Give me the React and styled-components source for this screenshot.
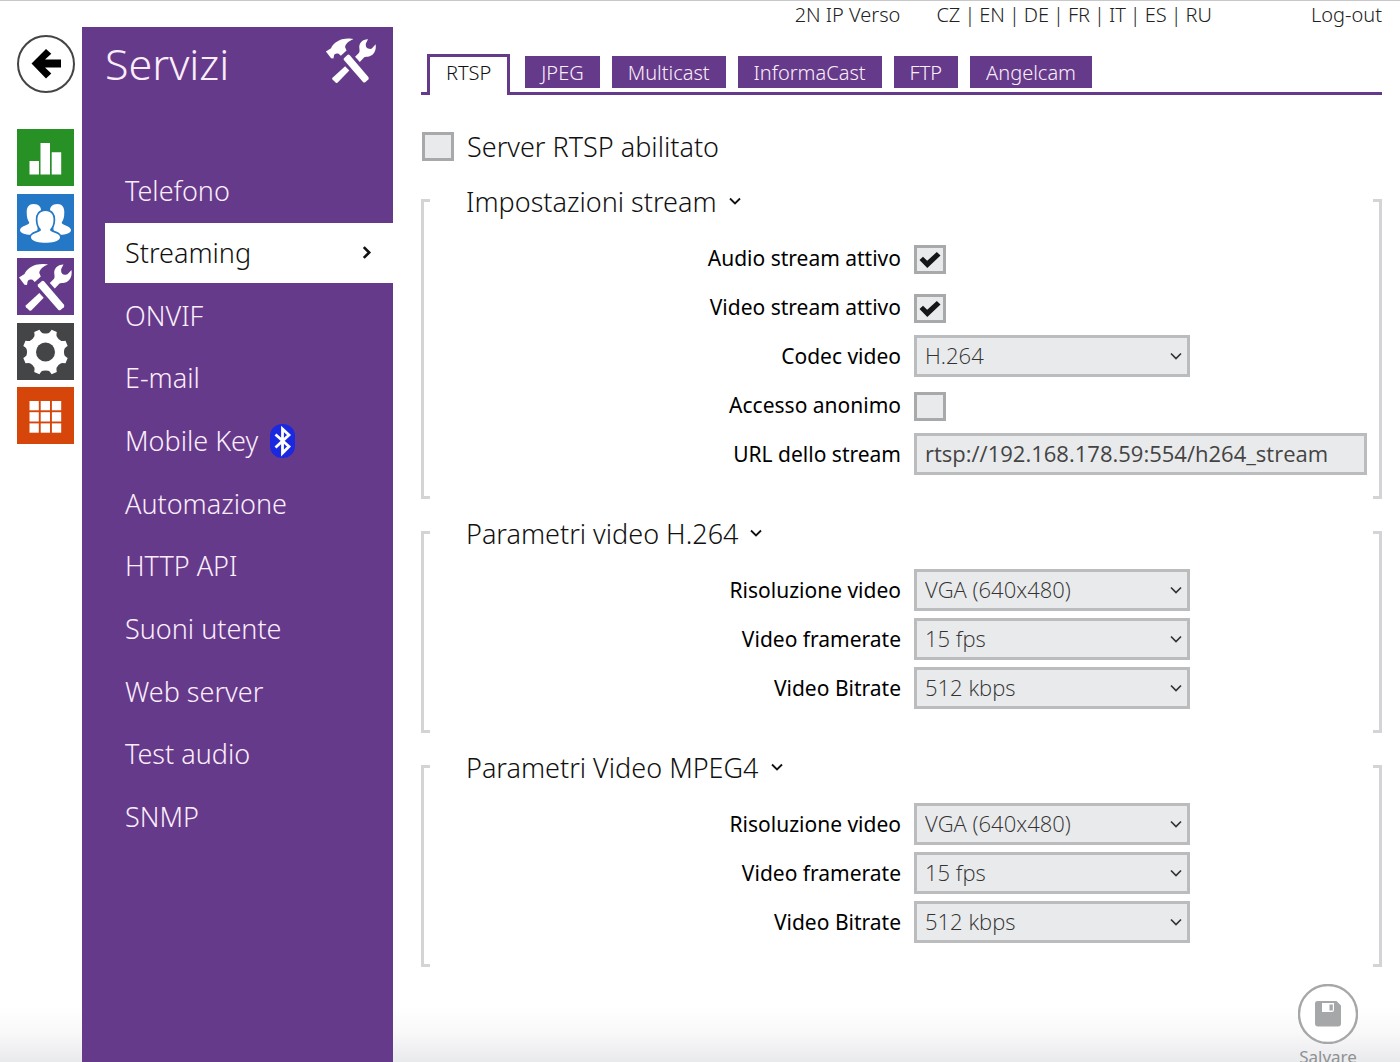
import React, { useState } from 'react'
import styled, { createGlobalStyle } from 'styled-components'

const PURPLE = '#663a8a'

const GlobalStyle = createGlobalStyle`
    *, *::before, *::after { box-sizing: border-box; }
    body {
        margin: 0;
        background: #fff;
        font-family: "Noto Sans", "Open Sans", sans-serif;
        font-weight: 300;
        color: #111;
    }
    button, input, select { font: inherit; color: inherit; margin: 0; }
    h1, h2, ul { margin: 0; padding: 0; font-weight: 300; }
    a { color: inherit; text-decoration: none; }
`;

const Page = styled.div`
    display: flex;
    min-height: 100vh;
    border-top: 1px solid #c8c8ca;
    background: linear-gradient(to top, #e9eaec 0px, #f8f8f9 28px, #fff 56px) fixed;
`;

/* left rail */
const Rail = styled.nav`
    flex: 0 0 82px;
    padding: 34px 0 0 17px;
`;
const BackButton = styled.button`
    display: block;
    width: 58px;
    height: 58px;
    padding: 0;
    border: 2px solid #444;
    border-radius: 50%;
    background: #fff;
    cursor: pointer;
`;
const RailLinks = styled.div`
    display: flex;
    flex-direction: column;
    justify-content: space-between;
    height: 315px;
    margin-top: 36px;
`;
const RailLink = styled.a`
    width: 57px;
    height: 57px;
    background: ${(p) => p.$color};
    svg { display: block; }
`;

/* purple menu */
const Sidebar = styled.aside`
    flex: 0 0 311px;
    margin-top: 26px;
    background: ${PURPLE};
    color: #fbeefc;
`;
const SidebarHead = styled.header`
    display: flex;
    align-items: flex-start;
    justify-content: space-between;
    height: 133px;
    padding: 0 15px 0 23px;
    svg { margin-top: 6px; }
`;
const Title = styled.h1`
    font-size: 43px;
    line-height: 74px;
`;
const Menu = styled.ul`
    display: grid;
    grid-auto-rows: 1fr;
    height: 689px;
    margin-left: 23px;
    list-style: none;
`;
const MenuLink = styled.a`
    display: flex;
    align-items: center;
    gap: 12px;
    height: 60px;
    padding: 0 20px;
    font-size: 27px;
    background: ${(p) => (p.$active ? '#fff' : 'transparent')};
    color: ${(p) => (p.$active ? '#111' : 'inherit')};
    svg:last-child { margin-left: ${(p) => (p.$active ? 'auto' : 0)}; }
`;

/* content */
const Main = styled.main`
    flex: 1;
    min-width: 0;
    padding: 0 18px 0 28px;
`;
const TopBar = styled.div`
    display: flex;
    justify-content: flex-end;
    height: 53px;
    font-size: 20px;
    line-height: 28px;
    color: #222;
`;
const Languages = styled.div`
    display: flex;
    gap: 4px;
    margin: 0 99px 0 36px;
`;
const Tabs = styled.div`
    display: flex;
    align-items: flex-end;
    gap: 12px;
    height: 41px;
    padding-left: 6px;
    border-bottom: 3px solid ${PURPLE};
`;
const Tab = styled.button`
    height: ${(p) => (p.$active ? 41 : 32)}px;
    margin: ${(p) => (p.$active ? '0 3px -3px 0' : '0 0 4px')};
    padding: ${(p) => (p.$active ? '0 16px 6px' : '2px 16px 0')};
    border: solid ${PURPLE};
    border-width: ${(p) => (p.$active ? '3px 3px 0' : 0)};
    background: ${(p) => (p.$active ? '#fff' : PURPLE)};
    color: ${(p) => (p.$active ? '#111' : '#fbeefc')};
    font-size: 20px;
    line-height: 30px;
    cursor: pointer;
`;
const ServerRow = styled.div`
    display: flex;
    align-items: center;
    gap: 13px;
    height: 28px;
    margin: 37px 0 39px;
    padding-left: 1px;
    font-size: 27px;
`;

const Section = styled.section`
    display: flex;
    margin-bottom: 32px;
`;
const Bracket = styled.span`
    flex: 0 0 9px;
    border: 3px solid #d3d4d6;
    ${(p) => (p.$right ? 'border-left: 0;' : 'border-right: 0;')}
`;
const SectionBody = styled.div`
    flex: 1;
    min-width: 0;
    padding-bottom: 24px;
`;
const SectionTitle = styled.h2`
    display: flex;
    align-items: center;
    gap: 12px;
    height: 32px;
    margin: -14px 0 20px;
    padding-left: 36px;
    font-size: 27px;
`;
const Fields = styled.div`
    display: grid;
    grid-template-columns: repeat(2, minmax(0, 1fr));
    grid-auto-rows: 42px;
    gap: 7px 13px;
    align-items: center;
    padding: 0 6px 0 18px;
`;
const Label = styled.label`
    text-align: right;
    font-size: 21px;
    font-weight: 400;
    color: #000;
`;
const CheckWrap = styled.span`
    display: grid;
    width: 32px;
    height: 29px;
    margin-top: ${(p) => (p.$field ? 3 : 0)}px;
    > * { grid-area: 1 / 1; }
    svg { place-self: center; pointer-events: none; }
`;
const CheckInput = styled.input`
    appearance: none;
    border: 3px solid #a8a9ab;
    background: #e9eaeb;
`;
const SelectWrap = styled.span`
    display: grid;
    width: 276px;
    max-width: 100%;
    > * { grid-area: 1 / 1; }
    svg { place-self: center end; margin-right: 8px; color: #333; pointer-events: none; }
`;
const SelectBox = styled.select`
    appearance: none;
    height: 42px;
    padding: 0 8px 2px;
    border: 3px solid #bbbcbe;
    border-radius: 0;
    background: #e9eaeb;
    font-family: "Open Sans", sans-serif;
    font-size: 22px;
    color: #333;
`;
const TextBox = styled.input`
    width: 100%;
    height: 42px;
    padding: 0 8px 2px;
    border: 3px solid #bbbcbe;
    background: #e9eaeb;
    font-family: "Open Sans", sans-serif;
    font-size: 22px;
    font-weight: 400;
    color: #444;
`;

const Footer = styled.footer`
    display: flex;
    justify-content: flex-end;
    margin-top: -15px;
    padding-right: 24px;
`;
const SaveButton = styled.button`
    display: flex;
    flex-direction: column;
    align-items: center;
    padding: 0;
    border: 0;
    background: none;
    color: #8f9092;
    font-size: 17px;
    font-weight: 400;
    line-height: 26px;
    cursor: pointer;
`;

/* icons */
const ToolsIcon = ({ size = 57 }) => (
  <svg width={size} height={size} viewBox="0 0 57 57" fill="#fff" aria-hidden="true">
    <path d="M2 19.5 L7.5 16 C9 12.500 13 8.500 19 6.700 C24 5.500 28.500 5.800 31 6.500 C26.500 8 22.300 11.500 22.300 15 L23.800 18.500 L17.800 24 L15.500 21.800 C12.500 21 10.800 22 10.500 24 L10 27 L7.500 26.700 Z" />
    <path d="M21.300 26.300 L25 23 Q26 22.300 27 23.300 L46.800 46.500 Q47.800 48 46.800 49.200 L43.500 52 Q42.300 52.800 41.200 51.700 L21 28.600 Q20.200 27.400 21.300 26.300Z" />
    <path d="M46.500 6.600 C40.500 6.500 36.600 11 37.300 16 C37.600 18.500 37.800 19.800 36.800 21 L32.800 25 L37.800 30.500 L42.500 25.500 C43.500 24.800 45.500 25 47.500 24.700 C52.500 24 55.500 18.500 54.500 12 L50.500 16.300 C49.300 17.200 46.300 16.700 45.200 15.700 C44.200 14.500 43.800 12 44.300 10.700 Z" />
    <path d="M22.300 35 L26.700 39.700 L14.500 52.300 Q13.300 53.200 12.200 52.200 L9 49.200 Q8 48.200 9 47.200 Z" />
  </svg>
);

const side = 'M16.500 10 C22 10 24.500 13 24 18 L21 30 L20 40.500 C10 42 3 39.500 3 36 C3 32 12.500 31 12.300 28.500 C10.500 26 9.700 23 9.700 18 C9.700 13 12 10 16.500 10Z';
const UsersIcon = () => (
  <svg width="57" height="57" viewBox="0 0 57 57" fill="#fff" aria-hidden="true">
    <path d={side} />
    <path d={side} transform="matrix(-1 0 0 1 57 0)" />
    <path
      d="M28.500 17 C34 17 36.700 20.500 36.500 26 C36.400 30.500 35.300 33 33 35.500 C33 39 43.500 38.500 43 43.500 C42.500 47.500 34 48.800 28.500 48.800 C23 48.800 14.500 47.500 14 43.500 C13.500 38.500 24 39 24 35.500 C21.700 33 20.600 30.500 20.500 26 C20.300 20.500 23 17 28.500 17Z"
      stroke="#2478c6" strokeWidth="3.500" paintOrder="stroke"
    />
  </svg>
);

const BarsIcon = () => (
  <svg width="57" height="57" viewBox="0 0 57 57" fill="#fff" aria-hidden="true">
    <path d="M12.500 32h9.500v13.500h-9.500z M23.500 14h9.500v31.500h-9.500z M34.700 23.300h9.500v22.200h-9.500z" />
  </svg>
);

const polar = (deg, r) => {
  const a = (deg * Math.PI) / 180;
  return `${(28.5 + r * Math.cos(a)).toFixed(1)} ${(29 + r * Math.sin(a)).toFixed(1)}`;
};
const gearPath = Array.from({ length: 8 }, (_, i) => {
  const a = 22.5 + i * 45;
  return `${i ? 'L' : 'M'}${polar(a - 7, 23)} L${polar(a + 7, 23)} Q${polar(a + 11, 19)} ${polar(a + 15, 19)} Q${polar(a + 22.5, 18)} ${polar(a + 30, 19)} Q${polar(a + 34, 19)} ${polar(a + 38, 23)}`;
}).join(' ');
const GearIcon = () => (
  <svg width="57" height="57" viewBox="0 0 57 57" aria-hidden="true">
    <path d={`${gearPath}Z`} fill="#fff" />
    <circle cx="28.500" cy="29" r="9.500" fill="#444547" />
  </svg>
);

const GridIcon = () => (
  <svg width="57" height="57" viewBox="0 0 57 57" fill="#fff" aria-hidden="true">
    {[0, 1, 2].map((y) => [0, 1, 2].map((x) => (
      <rect key={`${x}${y}`} x={12.5 + x * 11.2} y={14 + y * 11.2} width="9.300" height="9.300" />
    )))}
  </svg>
);

const ArrowIcon = () => (
  <svg width="54" height="54" viewBox="2 2 54 54" aria-hidden="true">
    <path d="M14.500 28.500 L29 14 L34.300 18.800 L28 24.500 H44 V32.500 H28 L34.300 38.500 L29 43.500 Z" />
  </svg>
);

const Chevron = ({ size = 12, right, width = 2 }) => (
  <svg width={size} height={size} viewBox="0 0 12 12" fill="none" stroke="currentColor" strokeWidth={width} aria-hidden="true">
    <path d={right ? 'M3.500 1 L8.500 6 L3.500 11' : 'M1 3.500 L6 8.500 L11 3.500'} />
  </svg>
);

const BluetoothIcon = () => (
  <svg width="25" height="34" viewBox="0 0 25 34" aria-hidden="true">
    <rect width="25" height="34" rx="12" fill="#1a28e0" />
    <path d="M5.500 10.500 L19 22.500 L12.500 29 V5 L19 11 L5.500 23.500" fill="none" stroke="#fff" strokeWidth="2.800" />
  </svg>
);

const CheckIcon = () => (
  <svg width="22" height="18" viewBox="0 0 22 18" aria-hidden="true">
    <path d="M0.500 9 L4 5.800 L8.200 9.800 L17.800 1 L21.500 4.500 L8.300 17 Z" fill="#161618" />
  </svg>
);

const SaveIcon = () => (
  <svg width="60" height="60" viewBox="0 0 60 60" aria-hidden="true">
    <circle cx="30" cy="30" r="29" fill="#fff" stroke="#a6a7a9" strokeWidth="2.400" />
    <path d="M19.500 17 H38.500 L43 21.500 V39.500 Q43 42.500 40 42.500 H20 Q17 42.500 17 39.500 V19.500 Q17 17 19.500 17Z" fill="#a6a7a9" />
    <path d="M24 19 H36 V26 Q36 28 34 28 H24Z" fill="#fff" />
    <rect x="31.500" y="20.500" width="3.300" height="6" fill="#a6a7a9" />
  </svg>
);

const rail = [
  { name: 'Stato', color: '#279126', icon: <BarsIcon /> },
  { name: 'Elenco', color: '#2478c6', icon: <UsersIcon /> },
  { name: 'Servizi', color: PURPLE, icon: <ToolsIcon /> },
  { name: 'Sistema', color: '#444547', icon: <GearIcon /> },
  { name: 'Hardware', color: '#d64509', icon: <GridIcon /> },
];

const menu = [
  'Telefono', 'Streaming', 'ONVIF', 'E-mail', 'Mobile Key', 'Automazione',
  'HTTP API', 'Suoni utente', 'Web server', 'Test audio', 'SNMP',
];
const tabs = ['RTSP', 'JPEG', 'Multicast', 'InformaCast', 'FTP', 'Angelcam'];
const languages = ['CZ', 'EN', 'DE', 'FR', 'IT', 'ES', 'RU'];

const videoFields = [
  { label: 'Risoluzione video', type: 'select', options: ['VGA (640x480)', 'QVGA (320x240)'] },
  { label: 'Video framerate', type: 'select', options: ['15 fps', '30 fps'] },
  { label: 'Video Bitrate', type: 'select', options: ['512 kbps', '1024 kbps'] },
];
const sections = [
  {
    id: 'stream',
    title: 'Impostazioni stream',
    fields: [
      { label: 'Audio stream attivo', type: 'check', value: true },
      { label: 'Video stream attivo', type: 'check', value: true },
      { label: 'Codec video', type: 'select', options: ['H.264', 'MPEG-4'] },
      { label: 'Accesso anonimo', type: 'check', value: false },
      { label: 'URL dello stream', type: 'text', value: 'rtsp://192.168.178.59:554/h264_stream' },
    ],
  },
  { id: 'h264', title: 'Parametri video H.264', fields: videoFields },
  { id: 'mpeg4', title: 'Parametri Video MPEG4', fields: videoFields },
];

const Checkbox = ({ id, value, field }) => {
  const [checked, setChecked] = useState(value);
  return (
    <CheckWrap $field={field}>
      <CheckInput id={id} type="checkbox" checked={checked} onChange={(e) => setChecked(e.target.checked)} />
      {checked && <CheckIcon />}
    </CheckWrap>
  );
};

const Field = ({ id, field }) => (
  <>
    <Label htmlFor={id}>{field.label}</Label>
    {field.type === 'check' && <Checkbox id={id} value={field.value} field />}
    {field.type === 'text' && <TextBox id={id} type="text" readOnly value={field.value} />}
    {field.type === 'select' && (
      <SelectWrap>
        <SelectBox id={id}>
          {field.options.map((o) => <option key={o}>{o}</option>)}
        </SelectBox>
        <Chevron width={1.7} />
      </SelectWrap>
    )}
  </>
);

const App = () => {
  const [tab, setTab] = useState('RTSP');
  return (
    <>
      <GlobalStyle />
      <Page>
        <Rail>
          <BackButton aria-label="Indietro"><ArrowIcon /></BackButton>
          <RailLinks>
            {rail.map((r) => (
              <RailLink key={r.name} href="#" aria-label={r.name} $color={r.color}>{r.icon}</RailLink>
            ))}
          </RailLinks>
        </Rail>
        <Sidebar>
          <SidebarHead>
            <Title>Servizi</Title>
            <ToolsIcon size={54} />
          </SidebarHead>
          <Menu>
            {menu.map((item) => (
              <li key={item}>
                <MenuLink href="#" $active={item === 'Streaming'}>
                  {item}
                  {item === 'Mobile Key' && <BluetoothIcon />}
                  {item === 'Streaming' && <Chevron size={13} right width={2.4} />}
                </MenuLink>
              </li>
            ))}
          </Menu>
        </Sidebar>
        <Main>
          <TopBar>
            <span>2N IP Verso</span>
            <Languages>
              {languages.map((l, i) => (
                <React.Fragment key={l}>
                  {i > 0 && <span>|</span>}
                  <a href="#">{l}</a>
                </React.Fragment>
              ))}
            </Languages>
            <a href="#">Log-out</a>
          </TopBar>
          <Tabs>
            {tabs.map((t) => (
              <Tab key={t} $active={t === tab} onClick={() => setTab(t)}>{t}</Tab>
            ))}
          </Tabs>
          <ServerRow>
            <Checkbox id="server" value={false} />
            <label htmlFor="server">Server RTSP abilitato</label>
          </ServerRow>
          {sections.map((s) => (
            <Section key={s.id}>
              <Bracket />
              <SectionBody>
                <SectionTitle>{s.title}<Chevron width={1.8} /></SectionTitle>
                <Fields>
                  {s.fields.map((f, i) => <Field key={f.label} id={`${s.id}-${i}`} field={f} />)}
                </Fields>
              </SectionBody>
              <Bracket $right />
            </Section>
          ))}
          <Footer>
            <SaveButton><SaveIcon />Salvare</SaveButton>
          </Footer>
        </Main>
      </Page>
    </>
  )
}

export default App
